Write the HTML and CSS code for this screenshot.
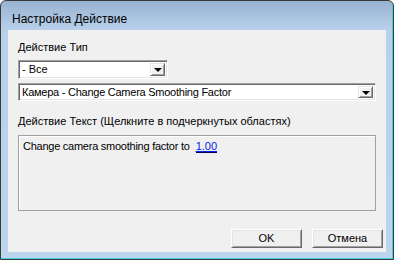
FILE: index.html
```html
<!DOCTYPE html>
<html lang="ru">
<head>
    <meta charset="UTF-8">
    <title>Настройка Действие</title>
    <link rel="stylesheet" href="styles.css">
</head>
<body>
    <div class="window">
        <div class="title">Настройка Действие</div>
        <div class="client">
            <div class="label">Действие Тип</div>
            <div class="combo combo-type">
                <span class="combo-text">- Все</span>
                <span class="combo-btn"><span class="arrow"></span></span>
            </div>
            <div class="combo combo-action">
                <span class="combo-text latin">Камера - Change Camera Smoothing Factor</span>
                <span class="combo-btn"><span class="arrow"></span></span>
            </div>
            <div class="label label-text">Действие Текст (Щелкните в подчеркнутых областях)</div>
            <div class="text-box">
                <span class="latin">Change camera smoothing factor to</span><a class="value" href="#">1.00</a>
            </div>
            <div class="buttons">
                <button class="btn">OK</button>
                <button class="btn">Отмена</button>
            </div>
        </div>
    </div>
</body>
</html>
```
FILE: styles.css
```css
body {
    margin: 0;
    background: #fff;
    font-family: "Liberation Sans", Arial, sans-serif;
    font-size: 11px;
    color: #000;
}
.window {
    width: 394px;
    height: 260px;
    box-sizing: border-box;
    border: 1px solid #3a3a3a;
    border-radius: 6px 6px 0 0;
    background: linear-gradient(#98b3d1, #b8d0ea 29px, #bcd4ec);
    box-shadow: inset -1px -1px #3fd0e6;
    padding: 0 7px 7px 7px;
    display: flex;
    flex-direction: column;
}
.title {
    height: 29px;
    box-sizing: border-box;
    padding: 11px 0 0 4px;
    font-size: 12px;
    line-height: 14px;
}
.client {
    flex: 1;
    background: #f0f0f0;
    padding: 11px 3px 4px 10px;
    display: flex;
    flex-direction: column;
}
.label {
    line-height: 13px;
    height: 13px;
}
.label-text {
    margin-top: 14px;
}
/* Tahoma-like narrower latin text */
.latin {
    letter-spacing: -0.25px;
}
.combo {
    box-sizing: border-box;
    display: flex;
    background: #fff;
    border: 1px solid;
    border-color: #a0a0a0 #fff #fff #a0a0a0;
    box-shadow: inset 1px 1px #696969, inset -1px -1px #e3e3e3;
    padding: 2px;
}
.combo-type {
    width: 150px;
    height: 19px;
    margin-top: 6px;
}
.combo-action {
    width: 358px;
    height: 18px;
    margin-top: 4px;
}
.combo-text {
    flex: 1;
    padding-left: 1px;
    line-height: 13px;
    white-space: nowrap;
}
.combo-btn {
    width: 15px;
    box-sizing: border-box;
    background: #f0f0f0;
    border: 1px solid;
    border-color: #e3e3e3 #696969 #696969 #e3e3e3;
    box-shadow: inset 1px 1px #fff, inset -1px -1px #a0a0a0;
    display: flex;
    align-items: center;
    justify-content: center;
}
.arrow {
    width: 0;
    height: 0;
    border-left: 4px solid transparent;
    border-right: 4px solid transparent;
    border-top: 4px solid #000;
    margin-top: 1px;
}
.text-box {
    width: 358px;
    height: 76px;
    box-sizing: border-box;
    margin-top: 7px;
    border: 1px solid #a0a0a0;
    box-shadow: inset 1px 1px #fff;
    padding: 4px 4px;
    line-height: 13px;
}
.value {
    color: #0026e6;
    text-decoration: underline;
    border-bottom: 1px solid #000060;
    margin-left: 6px;
}
.buttons {
    margin-top: 18px;
    display: flex;
    justify-content: flex-end;
    gap: 10px;
}
.btn {
    width: 71px;
    height: 19px;
    box-sizing: border-box;
    font-family: "Liberation Sans", Arial, sans-serif;
    font-size: 11px;
    color: #000;
    background: #f0f0f0;
    border: 1px solid;
    border-color: #fff #696969 #696969 #fff;
    box-shadow: inset 1px 1px #e3e3e3, inset -1px -1px #a0a0a0;
    padding: 0;
    line-height: 15px;
}
```
